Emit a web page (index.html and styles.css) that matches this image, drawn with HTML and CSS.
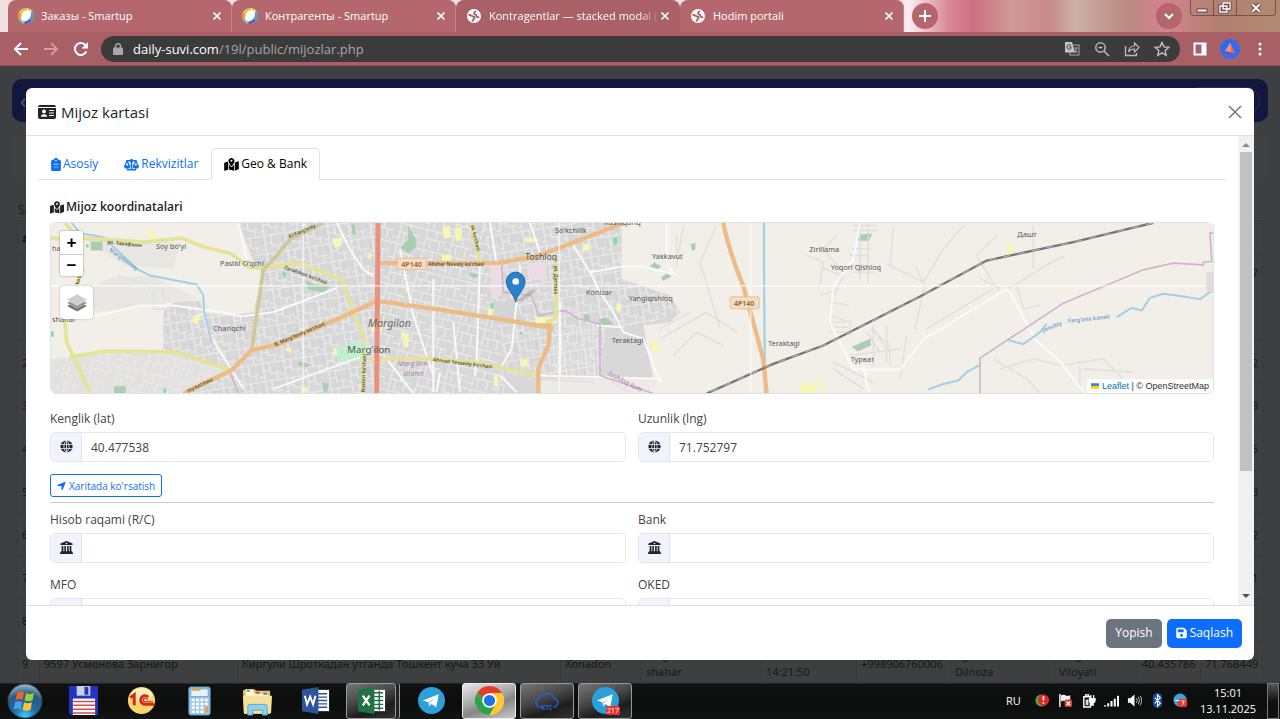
FILE: index.html
```html
<!DOCTYPE html>
<html lang="uz">
<head>
<meta charset="utf-8">
<title>Mijozlar</title>
<link rel="stylesheet" href="styles.css">
</head>
<body>
<svg class="defs" width="0" height="0" aria-hidden="true">
  <defs>
    <symbol id="i-smartup" viewBox="0 0 16 16">
      <circle cx="8" cy="8" r="8" fill="#ecc24a"/>
      <path d="M9 0a8 8 0 0 1 5.500 3.500L8 8z" fill="#e8d27a"/>
      <path d="M14.500 3.500A8 8 0 0 1 14 13L8 8z" fill="#4a9fd8"/>
      <path d="M14 13A8 8 0 0 1 6 15.800L8 8z" fill="#5a62c0"/>
      <path d="M6 15.800A8 8 0 0 1 .8 11.500L8 8z" fill="#8fb4e2"/>
      <path d="M.8 11.500A8 8 0 0 1 .8 4.500L8 8z" fill="#e59a3c"/>
      <ellipse cx="7.800" cy="7.800" rx="4.500" ry="6" transform="rotate(35 8 8)" fill="#fff"/>
    </symbol>
    <symbol id="i-world" viewBox="0 0 16 16">
      <circle cx="8" cy="8" r="7" fill="#fff"/>
      <path d="M2.500 7c2.500-.5 3 1.300 4.500 1.500s2 .8 1.200 2S7 12.500 6 13.200M13.200 9c-1.500.8-3-.2-2.700-1.500S8 6.500 8 5.300 9 3.500 10 3" fill="none" stroke="#a96067" stroke-width="1.900"/>
    </symbol>
    <symbol id="i-x" viewBox="0 0 10 10"><path d="M1.500 1.500l7 7M8.500 1.500l-7 7" stroke="currentColor" stroke-width="1.700"/></symbol>
    <symbol id="i-map" viewBox="0 0 576 512"><path fill="currentColor" d="M408 120c0 54.600-73.100 151.900-105.200 192c-7.700 9.600-22 9.600-29.600 0C241.100 271.900 168 174.600 168 120C168 53.700 221.700 0 288 0s120 53.700 120 120zm8 80.400c3.500-6.900 6.700-13.800 9.600-20.600c.5-1.200 1-2.500 1.500-3.700l116-46.400C558.900 123.400 576 135 576 152V422.800c0 9.800-6 18.600-15.100 22.300L416 503V200.400zM137.600 138.300c2.400 14.100 7.200 28.300 12.800 41.500c2.900 6.800 6.100 13.700 9.600 20.600V451.800L32.900 502.700C17.100 509 0 497.400 0 480.400V209.600c0-9.800 6-18.600 15.100-22.300l122.600-49zM327.800 332c13.900-17.400 35.700-45.700 56.200-77V504.300L192 449.400V255c20.500 31.300 42.300 59.600 56.200 77c20.500 25.600 59.100 25.600 79.600 0zM288 152a40 40 0 1 0 0-80 40 40 0 1 0 0 80z"/></symbol>
    <symbol id="i-globe" viewBox="0 0 16 16"><circle cx="8" cy="8" r="7.500" fill="currentColor"/><path d="M.5 5.500h15M.5 10.500h15M8 0v16M8 .5C3.700 4 3.700 12 8 15.500M8 .5c4.300 3.500 4.300 11.500 0 15" fill="none" stroke="#eef3ff" stroke-width="1"/></symbol>
    <symbol id="i-bank" viewBox="0 0 16 16"><path fill="currentColor" d="M8 0l7.500 3.200V5H.5V3.200zM2 6h2.200v6.500H2zM5.300 6h2v6.500h-2zM8.700 6h2v6.500h-2zM11.800 6H14v6.500h-2.200zM1.200 12.500h13.600L16 15v1H0v-1z"/><circle cx="8" cy="3" r="1" fill="#eef3ff"/></symbol>
    <symbol id="i-telegram" viewBox="0 0 28 28"><circle cx="14" cy="14" r="14" fill="#2ca0da"/><path d="M5 14L21.500 7.500 19 21l-5-3.500-2.500 2.700-.7-4.500z" fill="#fff"/><path d="M10.800 15.700L19 9.800l-6 6.500-1.500 3.900z" fill="#b7d9ec"/></symbol>
  </defs>
</svg>

<header class="tabstrip">
  <div class="tab">
    <svg class="fav"><use href="#i-smartup"/></svg><span class="tab-title">Заказы - Smartup</span>
    <button class="tab-x" aria-label="Yopish"><svg><use href="#i-x"/></svg></button>
  </div>
  <div class="tab">
    <svg class="fav"><use href="#i-smartup"/></svg><span class="tab-title">Контрагенты - Smartup</span>
    <button class="tab-x" aria-label="Yopish"><svg><use href="#i-x"/></svg></button>
  </div>
  <div class="tab tab-active">
    <svg class="fav"><use href="#i-world"/></svg><span class="tab-title">Kontragentlar — stacked modal (</span>
    <button class="tab-x" aria-label="Yopish"><svg><use href="#i-x"/></svg></button>
  </div>
  <div class="tab">
    <svg class="fav"><use href="#i-world"/></svg><span class="tab-title">Hodim portali</span>
    <button class="tab-x" aria-label="Yopish"><svg><use href="#i-x"/></svg></button>
  </div>
  <button class="round new-tab" aria-label="Yangi"><svg viewBox="0 0 12 12"><path d="M6 0v12M0 6h12" stroke="#fff" stroke-width="2"/></svg></button>
  <button class="round search-tab" aria-label="Qidirish"><svg viewBox="0 0 12 12"><path d="M2 4l4 4 4-4" fill="none" stroke="#fff" stroke-width="2"/></svg></button>
  <div class="win-btns">
    <button aria-label="Min"><svg viewBox="0 0 14 12"><rect x="2" y="7" width="10" height="3" fill="#fff" stroke="#5e4444"/></svg></button>
    <button aria-label="Max"><svg viewBox="0 0 14 12"><path d="M5 1h7v6H5zM2 4h7v6H2z" fill="#9b7466" stroke="#5e4444" stroke-width="3"/><path d="M5 1h7v6H5zM2 4h7v6H2z" fill="none" stroke="#fff" stroke-width="1.300"/></svg></button>
    <button class="win-x" aria-label="Close"><svg viewBox="0 0 14 12"><path d="M3.500 2.500l7 7M10.500 2.500l-7 7" stroke="#5e4444" stroke-width="4"/><path d="M3.500 2.500l7 7M10.500 2.500l-7 7" stroke="#fff" stroke-width="2"/></svg></button>
  </div>
</header>

<nav class="toolbar">
  <button aria-label="Orqaga"><svg viewBox="0 0 16 16"><path d="M15 8H2M8 2L2 8l6 6" fill="none" stroke="#fff" stroke-width="2"/></svg></button>
  <button aria-label="Oldinga"><svg viewBox="0 0 16 16"><path d="M1 8h13M8 2l6 6-6 6" fill="none" stroke="#d39da1" stroke-width="1.800"/></svg></button>
  <button aria-label="Yangilash"><svg viewBox="0 0 16 16"><path d="M13.300 10.500A6 6 0 1 1 12.800 4.500" fill="none" stroke="#fff" stroke-width="2"/><path d="M15 1v6.500H8.500z" fill="#fff"/></svg></button>
  <div class="omnibox">
    <svg class="lock" viewBox="0 0 10 12"><rect y="4.500" width="10" height="7.500" rx="1" fill="#a8a8a8"/><path d="M2.500 5V3.200a2.500 2.500 0 0 1 5 0V5" fill="none" stroke="#a8a8a8" stroke-width="1.400"/></svg>
    <span class="url"><b>daily-suvi.com</b>/19l/public/mijozlar.php</span>
    <button aria-label="Tarjima"><svg viewBox="0 0 16 16"><rect x="6" y="4" width="9" height="10" fill="none" stroke="#aaa"/><path d="M1 1h7l3 10.500H1z" fill="#c2c2c2"/><path d="M7 4.500A2.300 2.300 0 1 0 7 7.500V6H5" fill="none" stroke="#444" stroke-width="1"/><path d="M10 7h4M12.500 7q0 3-2 5M11 9l2.500 3" fill="none" stroke="#aaa" stroke-width="1"/></svg></button>
    <button aria-label="Masshtab"><svg viewBox="0 0 16 16"><circle cx="6.500" cy="6.500" r="4.700" fill="none" stroke="#b9b9b9" stroke-width="1.500"/><path d="M10 10l5 5M4.500 6.500h4" stroke="#b9b9b9" stroke-width="1.600"/></svg></button>
    <button aria-label="Ulashish"><svg viewBox="0 0 16 16"><path d="M1.500 5v9.500h11V12" fill="none" stroke="#b9b9b9" stroke-width="1.300"/><path d="M4.500 11q.5-6 6-6V2l4.500 4.500-4.500 4.500V8Q6.500 8 4.500 11z" fill="none" stroke="#b9b9b9" stroke-width="1.200"/></svg></button>
    <button aria-label="Xatcho'p"><svg viewBox="0 0 16 16"><path d="M8 1.500l2 4.400 4.800.5-3.600 3.200 1 4.700L8 11.900l-4.200 2.400 1-4.700L1.200 6.400 6 5.900z" fill="none" stroke="#c4c4c4" stroke-width="1.400"/></svg></button>
  </div>
  <button aria-label="Panel"><svg viewBox="0 0 16 16"><path fill="#fff" fill-rule="evenodd" d="M1.500 1.500h13v13h-13zM3.500 3.500v9h6v-9z"/></svg></button>
  <button aria-label="Profil" class="avatar"><svg viewBox="0 0 20 20"><circle cx="10" cy="10" r="10" fill="#2d6cf0"/><path d="M10.500 3.500l4.500 11-3.500-1z" fill="#f0604c"/><path d="M10.500 3.500L11.500 13.500 5 12z" fill="#ff8e6e"/><path d="M5 12l6.500 1.500-2 2z" fill="#c23a48"/></svg></button>
  <button aria-label="Menyu"><svg viewBox="0 0 16 16"><g fill="#fff"><circle cx="8" cy="3" r="1.500"/><circle cx="8" cy="8" r="1.500"/><circle cx="8" cy="13" r="1.500"/></g></svg></button>
</nav>

<main class="viewport">
  <div class="page" aria-hidden="true">
    <div class="topbar"><span>‹</span><span class="topbar-pill"></span></div>
    <div class="filters"></div>
    <div class="caption">Sahifa</div>
    <table class="grid">
      <colgroup><col class="c1"><col class="c2"><col class="c3"><col class="c4"><col class="c5"><col class="c6"><col class="c7"><col class="c8"><col class="c9"><col class="c10"><col class="c11"></colgroup>
      <tr class="head"><th>#</th><th></th><th></th><th></th><th></th><th></th><th></th><th></th><th></th><th></th><th></th></tr>
      <tr class="tall"><td></td><td></td><td></td><td></td><td></td><td></td><td></td><td></td><td></td><td></td><td>71.752797</td></tr>
      <tr><td>2</td><td></td><td></td><td></td><td></td><td></td><td></td><td></td><td></td><td></td><td>71.768442</td></tr>
      <tr><td>3</td><td></td><td></td><td></td><td></td><td></td><td></td><td></td><td></td><td></td><td>71.768443</td></tr>
      <tr><td>4</td><td></td><td></td><td></td><td></td><td></td><td></td><td></td><td></td><td></td><td>71.768445</td></tr>
      <tr><td>5</td><td></td><td></td><td></td><td></td><td></td><td></td><td></td><td></td><td></td><td>71.768443</td></tr>
      <tr><td>6</td><td></td><td></td><td></td><td></td><td></td><td></td><td></td><td></td><td></td><td>71.768442</td></tr>
      <tr><td>7</td><td></td><td></td><td></td><td></td><td></td><td></td><td></td><td></td><td></td><td>71.768441</td></tr>
      <tr><td>8</td><td></td><td></td><td></td><td></td><td></td><td></td><td></td><td></td><td></td><td></td></tr>
      <tr><td>9</td><td>9597 Усмонова Зарнигор</td><td>Киргули Шроткадан утганда Тошкент куча 33 Уй</td><td>Xonadon</td><td>Farg'ona<br>shahar</td><td>13.11.2025<br>14:21:50</td><td>+998906760006</td><td>Agent<br>Dilnoza</td><td>Farg'ona<br>Viloyati</td><td>40.435786</td><td>71.768449</td></tr>
    </table>
  </div>

  <section class="modal" role="dialog" aria-labelledby="ttl">
    <header class="modal-head">
      <svg class="i-card" viewBox="0 0 18 14"><path fill="currentColor" fill-rule="evenodd" d="M2 0h14a2 2 0 0 1 2 2H0a2 2 0 0 1 2-2zM0 3h18v9a2 2 0 0 1-2 2H2a2 2 0 0 1-2-2zM6 4.500a1.900 1.900 0 1 0 0 3.800 1.900 1.900 0 0 0 0-3.800zM2.800 11.800h6.400Q9 9.200 6.800 9.200H5.200Q3 9.200 2.800 11.800zM11 5v1h5V5zM11 7.500v1h5v-1zM11 10v1h5v-1z"/></svg>
      <h1 id="ttl">Mijoz kartasi</h1>
      <button class="close" aria-label="Yopish"><svg viewBox="0 0 14 14"><path d="M1 1l12 12M13 1L1 13" stroke="#7a7a7a" stroke-width="1.600"/></svg></button>
    </header>
    <div class="modal-mid">
      <div class="modal-body">
        <div class="nav-tabs" role="tablist">
          <button role="tab"><svg class="i-clip" viewBox="0 0 384 512"><path fill="currentColor" fill-rule="evenodd" d="M192 0c-41.800 0-77.400 26.700-90.500 64H64C28.700 64 0 92.700 0 128V448c0 35.300 28.700 64 64 64H320c35.300 0 64-28.700 64-64V128c0-35.300-28.700-64-64-64H282.500C269.400 26.700 233.800 0 192 0zm0 64a32 32 0 1 1 0 64 32 32 0 1 1 0-64zM96 230H290V256H96zM96 340H290V366H96z"/></svg>Asosiy</button>
          <button role="tab"><svg class="i-wide" viewBox="0 0 20 16"><path d="M10 1v14M4 15h12M3 3h14" stroke="currentColor" stroke-width="2"/><circle cx="10" cy="3" r="2.300" fill="currentColor"/><path d="M4.200 3.500L1 10h6.400zM15.800 3.500L12.600 10H19z" fill="none" stroke="currentColor" stroke-width="1.600"/><path fill="currentColor" d="M0 9.500h8.400a4.200 4 0 0 1-8.400 0zM11.600 9.500H20a4.200 4 0 0 1-8.400 0z"/></svg>Rekvizitlar</button>
          <button role="tab" class="active" aria-selected="true"><svg class="i-wide"><use href="#i-map"/></svg>Geo &amp; Bank</button>
        </div>
        <div class="pane">
          <h2><svg class="i-wide"><use href="#i-map"/></svg>Mijoz koordinatalari</h2>
          <div class="map">
            <svg class="tiles" viewBox="33 21 3486 513" preserveAspectRatio="xMidYMid slice">
              <defs>
                <pattern id="p1" width="64" height="54" patternUnits="userSpaceOnUse" patternTransform="rotate(-9)"><path d="M0 4h64M14 4v50M34 4v32M34 36h30M52 36v18M14 26h20M0 44h14" fill="none" stroke="#f0f0f0" stroke-width="3"/><path d="M24 4v20M44 6v28M4 8v34" stroke="#c6c6c6" stroke-width="1"/></pattern>
                <pattern id="p2" width="80" height="62" patternUnits="userSpaceOnUse" patternTransform="rotate(14)"><path d="M0 8h80M20 8v54M20 34h60M50 8v26M64 34v28M0 52h20M35 34v28" fill="none" stroke="#f0f0f0" stroke-width="3"/><path d="M8 10v40M58 10v22M28 36v24" stroke="#c8c8c8" stroke-width="1"/></pattern>
                <pattern id="p3" width="24" height="90" patternUnits="userSpaceOnUse" patternTransform="rotate(-3)"><path d="M6 0v90M0 80h24M17 0v80" fill="none" stroke="#eee" stroke-width="2"/></pattern>
              </defs>
              <rect x="0" y="0" width="3600" height="600" fill="#f2efe9"/>
              <g class="urban">
                <path d="M595 20L645 150 668 170 640 290 560 300 490 290 480 255 400 260 370 290V400L570 460 430 533H1800L1840 490 1810 330 1890 320 1920 290 1890 240 1745 190V22z" fill="#d9d8d8"/>
                <path d="M33 430L200 415 400 410 570 465 430 533H33z" fill="#e4e2e0"/>
                <path d="M130 70L420 80 400 160 250 150zM200 190L330 180 480 250 330 270 170 290 130 240z" fill="#e9e7e3"/>
                <path d="M595 20L668 170 640 290 560 300 480 255 370 290V400L570 460 430 533H1010V20z" fill="url(#p1)"/>
                <path d="M1010 20H1330L1400 533H1010z" fill="url(#p2)"/>
                <path d="M1330 20H1745V190L1890 240 1920 290 1810 330 1700 330 1680 480H1400z" fill="url(#p1)"/>
                <path d="M1535 330H1680V490H1535z" fill="url(#p3)"/>
                <path d="M33 430L200 415 400 410 570 465 430 533H33z" fill="url(#p2)" opacity=".6"/>
                <path d="M1500 490H1860L1820 534H1500z" fill="#eeebe6"/>
                <path d="M1360 260L1420 250 1460 330 1370 325z" fill="#d4d4d4"/>
              </g>
              <g fill="#eddbe5"><path d="M1352 150h32l10 70-20 30-20-5zM1460 145l60-8v55l-50 3z"/></g>
              <g fill="#f6f6b8"><path d="M315 42l25 3 15 30-25-5zM875 70l32-3-3 25-20 3zM460 300l28-8-18 35-14-8zM880 398h24v22h-24zM1085 350l22 5-2 40-15-3zM985 112h8v18h-8zM1098 212h10v18h-10zM785 515h18v16h-18zM740 395l16 4-3 10-14-2zM996 323h30v26h-30zM1208 35l22-4 4 34-22 3zM1246 36h20v40h-20zM1205 120l28-4v22l-26 4zM1345 275l14 3-3 24-12-4zM1362 478h12v36h-12zM1440 432h24v20h-24zM1455 68l34-2v12l-34 4zM1628 85h20v20h-20zM1730 265l16 5-8 24-10-10zM1834 380h22v30h-22zM1486 305h65v18h-65zM2280 505l50-4v30h-50zM2898 90l20-4 4 28-20 2zM2340 490h12v40h-12z"/></g>
              <g fill="#a9cfb0"><path d="M152 78h36v27h-36zM1105 30l22 40 2 25-25 18-22-15 22-25zM935 25l12 4v28h-10zM795 195l30 12 50 4-25 20-45-8zM775 436l40 12-20 8-20-6zM845 500l22 4-6 28-10-4zM222 512h35v22h-35zM1290 170l28 8-10 10-20-6zM1635 295l15 8-5 14-15-4zM1675 312l25-7 22 22-35 2zM1830 152l12-12 22 12-14 12zM1862 186l18-12 15 8-25 14zM1952 86l14-4v20l-10 4zM2460 57l36-3-8 22h-35zM2435 394l56-24 2 20-40 18z"/></g>
              <path d="M890 400l60-22 30 10v42l-85 10z" fill="#bdf0cc"/>
              <g fill="#74e0b4"><path d="M730 168l8 6-2 12-8-6zM138 86h8v10h-8zM33 348h8v16h-8zM1352 262h8v18h-8zM1720 68l12-4v22l-12 2zM370 520h8v12h-8zM1440 350h6v6h-6z"/></g>

              <g class="lane-soft">
                <path d="M230 180l80 20 40 50M90 250l90 20M370 220v50M340 220v60h50M60 440v80M100 470l120 20M120 430v100M340 430l-20 100"/>
                <path d="M1910 60v90M1930 30l-20 120M2030 30l-50 110 60 200M1950 290l-90 50M1860 370l140-80 90 60M1900 420l70-70 80 40M1700 490l150 90M2390 60l-40 40 50 60M2300 120l50 20-10 70M2350 160l60 20-40 80 60 10"/>
                <path d="M2560 30l-10 120 100 50 60-100 60-70M2625 150l30 60-30 130M2600 360l-20 130M2870 60l-60 60 60 100M2930 210l20 70 50-10M2980 30v130M2660 340l100-60 100-60M2820 190l60 30M2880 460l100-30 80 20 130-20 60 60M3120 450v84M3130 460l150 10M2860 430l100 60 40 44"/>
                <path d="M2490 340l60 50v60M2430 420l150-20M2500 330v120M2540 330v110M2370 300l60 20v40M2340 240l60-20"/>
              </g>
              <g class="hatch"><path d="M2440 30h70M2438 45h75M2435 100h60M2430 120h55M2430 150h50M2440 170h60M2460 20v170M2485 20v180M2370 320h50M2368 335h56M2366 350h50M2480 350l40 60M2500 340l40 60M2380 440l120 60M2380 460l90 60M1460 490l200 10"/></g>

              <g class="lane">
                <path d="M130 310L300 270 400 270 550 290 600 303 700 290 890 218"/>
                <path d="M490 290L505 350 560 440 610 520M700 520L960 425M890 22l40 80 40 60 30 20M595 22L620 130M1040 430l80 104"/>
                <path d="M1320 140L1310 430 1305 480M1430 260l-15 140-35 60M1380 480l50 50M1470 22l30 90M1440 150v70M1600 90l50 80 30 60 40 60 30 60 60 20 50 130M1650 170l100-17h60l100 25M1880 25v120l20 30M1480 480L1865 490M1670 330l80 5M1200 470l-10 60M1080 100l40 200 60 180M1180 190v340M1350 20l20 130M1560 260v220M1240 320l20 210"/>
                <path d="M2460 22l-20 110-60 80-10 110 70 140 140 0 70-90 100-60 130-80 25-10 80 150 70 60 100 130M2470 450l15 80"/>
              </g>
              <path d="M2905 220l130-80 40-18" class="lane-soft"/>
              <g class="river">
                <path d="M95 22L130 65M130 55L190 65 290 160 330 180 470 207 490 240 492 290 515 380"/>
                <path d="M2172 22V150L2175 534" stroke-width="7"/>
                <path d="M2665 522l40-15 50-12 25-25 40-22M2900 372l50 14 50-36 20-25M3230 305l45-28 30 8 25-38 40-12 60 8 50 8 50-35"/>
              </g>
              <g class="border"><path d="M570 470l25 62M1385 150l5 80 85 10 20 60 80-15 40 25 65 15V480l160 54M2820 534V428l250-165 240-100 90-20 90 5v-8l25-2-5-85h25"/></g>
              <g class="road-y">
                <path d="M75 22l40 45 80 5 120 8 110-12 70 27 80 20 50 40 40 3 110-16 100 40 30 10 70 190M33 68l60 5M130 160q-30 60-55 160l5 60 70 150M90 425l110-18 200 2 175 55M985 430H1180M970 400v134M1170 430l130 10 190 38M1295 22l28 130M1548 140v170l-30 10"/>
                <path d="M850 22l-100 50-50 60-30 30-35 240" stroke="#cfc99a"/>
              </g>
              <g class="road-o">
                <path d="M430 534l145-70 60-60 80-18 210-90 85-40 200 28 220 35 110 20M1020 143H1370l120-20 260-100M1500 330h30l-5 60-30 70v74M2050 22q15 80 60 190l60 220 10 102"/>
              </g>
              <path d="M1014 22L1010 534" stroke="#e8917c" stroke-width="15"/>
              <path d="M3340 22L3100 80 2840 135 2640 243 2350 390 2200 445 2000 534" fill="none" stroke="#747474" stroke-width="7"/>
              <path d="M3340 22L3100 80 2840 135 2640 243 2350 390 2200 445 2000 534" fill="none" stroke="#b9b9b9" stroke-width="3" stroke-dasharray="22 22"/>
              <path d="M33 211H3520M790 22v512M1558 22v512M2132 22v512" stroke="#fff" stroke-width="5" opacity=".6"/>
              <path d="M3500 170h20v60h-20z" fill="#dcdcdc"/>

              <g class="place">
                <text x="348" y="101">Soy bo'yi</text><text x="540" y="151">Pastki O'qchi</text><text x="519" y="345">Chariqchi</text>
                <text x="36" y="107">ha</text><text x="36" y="319">shahar</text>
                <text x="1545" y="53">So'kchilik</text><text x="1836" y="131">Yakkavut</text><text x="1638" y="238">Konizar</text><text x="1766" y="257">Yangiqishloq</text><text x="1715" y="381">Teraktagi</text><text x="2184" y="390">Teraktagi</text><text x="2308" y="110">Zirillama</text><text x="2372" y="164">Yoqori Qishloq</text><text x="2932" y="63">Дашт</text><text x="2432" y="438">Турват</text>
                <text x="1692" y="28">Rashiqariq</text>
              </g>
              <text class="town" x="1456" y="132">Toshloq</text>
              <text class="town big" x="922" y="411">Marg'ilon</text>
              <text class="ital" x="984" y="335">Margilon</text>
              <text class="lilac" x="1074" y="451">Marg'ilon</text><text class="lilac" x="1090" y="480">shahri</text>
              <text class="lilac" transform="translate(1700 478) rotate(27)">Toshloq tum</text>
              <g class="street">
                <text transform="translate(202 84) rotate(6)">ул. Зарафшон</text>
                <text transform="translate(732 160) rotate(20)">Zarafshon ko'chasi</text>
                <text transform="translate(748 68) rotate(-23)">Al-Farg'oniy</text>
                <text transform="translate(706 392) rotate(-23)">B. Marg'iloniy ko'chasi</text>
                <text transform="translate(444 532) rotate(-26)">niy ko'chasi</text>
                <text x="1165" y="152">Alisher Navoiy ko'chasi</text>
                <text transform="translate(1178 437) rotate(7)">Ahmad Yassaviy ko'chasi</text>
                <text transform="translate(974 530) rotate(-88)">Buston ko'chasi</text>
                <text transform="translate(1292 30) rotate(76)">ek ko'chasi</text>
                <text transform="translate(1542 150) rotate(90)">ул. Дустлик</text>
                <text transform="translate(116 208) rotate(-75)">ko'cha</text>
              </g>
              <g class="water">
                <text transform="translate(206 106) rotate(36)">Margilonsoy</text>
                <text transform="translate(3010 350) rotate(-22)">Janubiy</text><text transform="translate(3084 322) rotate(-6)">Farg'ona kanali</text>
              </g>
              <g class="shield"><rect x="1072" y="128" width="88" height="34" rx="4"/><text x="1084" y="153">4P140</text><rect x="2070" y="244" width="88" height="36" rx="4"/><text x="2082" y="270">4P140</text></g>
              <path d="M1427 258l52-38 8 8-38 28z" fill="#777" opacity=".35"/>
              <path d="M1427 260c-5-25-28-38-28-62a28 28 0 0 1 56 0c0 24-23 37-28 62z" fill="#2a81cb" stroke="#2168a5" stroke-width="3"/><circle cx="1427" cy="198" r="10" fill="#fff"/>
            </svg>
            <div class="zoomer"><button aria-label="Zoom in">+</button><button aria-label="Zoom out">−</button></div>
            <button class="layers" aria-label="Layers"><svg viewBox="0 0 20 18"><path d="M0 12l10 5.500L20 12l-3-1.500-7 4-7-4z" fill="#777"/><path d="M0 9l10 5.500L20 9l-3-1.500-7 4-7-4z" fill="#9a9a9a"/><path d="M0 5.700L10 .3l10 5.400-10 5.500z" fill="#cfcfcf"/></svg></button>
            <div class="credit"><svg viewBox="0 0 12 8"><path fill="#4c7be1" d="M0 0h12v4H0z"/><path fill="#ffd500" d="M0 4h12v4H0z"/></svg><span><a href="#">Leaflet</a> | © OpenStreetMap</span></div>
          </div>
          <div class="row">
            <div class="field"><label for="lat">Kenglik (lat)</label><div class="group"><span class="addon"><svg><use href="#i-globe"/></svg></span><input id="lat" value="40.477538"></div></div>
            <div class="field"><label for="lng">Uzunlik (lng)</label><div class="group"><span class="addon"><svg><use href="#i-globe"/></svg></span><input id="lng" value="71.752797"></div></div>
          </div>
          <button class="show"><svg viewBox="0 0 448 512"><path fill="currentColor" d="M429.600 92.100c4.900-11.900 2.100-25.600-7-34.700s-22.800-11.900-34.700-7l-352 144c-14.200 5.800-22.200 20.800-19.300 35.800s16.100 25.800 31.400 25.800H224V432c0 15.300 10.800 28.400 25.800 31.400s30-5.100 35.800-19.300l144-352z"/></svg>Xaritada ko'rsatish</button>
          <hr>
          <div class="row">
            <div class="field"><label for="rc">Hisob raqami (R/C)</label><div class="group"><span class="addon"><svg><use href="#i-bank"/></svg></span><input id="rc"></div></div>
            <div class="field"><label for="bank">Bank</label><div class="group"><span class="addon"><svg><use href="#i-bank"/></svg></span><input id="bank"></div></div>
          </div>
          <div class="row">
            <div class="field"><label for="mfo">MFO</label><div class="group"><span class="addon"></span><input id="mfo"></div></div>
            <div class="field"><label for="oked">OKED</label><div class="group"><span class="addon"></span><input id="oked"></div></div>
          </div>
        </div>
      </div>
      <div class="scroll" aria-hidden="true">
        <svg viewBox="0 0 8 4"><path d="M0 4l4-4 4 4z" fill="#8a8a8a"/></svg>
        <div class="track"><div class="thumb"></div></div>
        <svg viewBox="0 0 8 4"><path d="M0 0l4 4 4-4z" fill="#505050"/></svg>
      </div>
    </div>
    <footer class="modal-foot">
      <button class="btn grey">Yopish</button>
      <button class="btn blue"><svg viewBox="0 0 448 512"><path fill="#fff" fill-rule="evenodd" d="M64 32C28.700 32 0 60.700 0 96V416c0 35.300 28.700 64 64 64H384c35.300 0 64-28.700 64-64V173.300c0-17-6.700-33.300-18.700-45.300L352 50.700C340 38.700 323.700 32 306.700 32H64zm0 96c0-17.700 14.300-32 32-32H288c17.700 0 32 14.300 32 32v64c0 17.700-14.300 32-32 32H96c-17.700 0-32-14.300-32-32V128zM224 288a64 64 0 1 1 0 128 64 64 0 1 1 0-128z"/></svg>Saqlash</button>
    </footer>
  </section>
</main>

<footer class="taskbar">
  <button class="task start" aria-label="Start"><svg viewBox="0 0 36 36"><defs><radialGradient id="orb" cx=".5" cy=".95" r=".95"><stop offset="0" stop-color="#3fd0f5"/><stop offset=".35" stop-color="#1d6ca6"/><stop offset=".7" stop-color="#2b5a80"/><stop offset="1" stop-color="#9fbccd"/></radialGradient></defs><circle cx="18" cy="18" r="17" fill="url(#orb)" stroke="#2a4a60"/><path d="M10 10q4-2.500 7-.8l-1.300 7.500q-3.500-1.500-7.200.8z" fill="#f0622d"/><path d="M19 10q4 2 8-.3l-1.500 7.500q-4 2-8 0z" fill="#9bcf3a"/><path d="M8 19.500q3.800-2.300 7.300-.7l-1.300 7.200q-3.500-1.500-7.300.6z" fill="#4aa4ec"/><path d="M17 19.300q4 2 8 0l-1.500 7.400q-4 2-7.800 0z" fill="#fcc53a"/></svg></button>
  <button class="task" aria-label="Total Commander"><svg viewBox="0 0 32 32"><path d="M1 1h30v30H3l-2-2z" fill="#2334c0"/><path d="M9 1h14v10H9z" fill="#c9d2e0"/><path d="M17 2h4v8h-4z" fill="#2334c0"/><path d="M5 14h23v17H5z" fill="#fff"/><path d="M5 17h23M5 21h23M5 25h23M5 29h23" stroke="#d8494b" stroke-width="1.500"/></svg></button>
  <button class="task" aria-label="1C"><svg viewBox="0 0 32 32"><circle cx="16" cy="16" r="14" fill="#f7d76a"/><ellipse cx="16" cy="10" rx="11" ry="7" fill="#fdf0b8"/><path d="M4.500 13l4-3v11M23 12.500a4.500 4.500 0 1 0-3 7.500h9" fill="none" stroke="#d9241b" stroke-width="3"/><path d="M22 15.500a2 2 0 1 0-2 2h8" fill="none" stroke="#d9241b" stroke-width="1.200"/></svg></button>
  <button class="task" aria-label="Calculator"><svg viewBox="0 0 32 32"><rect x="5" y="2" width="22" height="29" rx="2" fill="#9fcbea" stroke="#5b94bf"/><rect x="7" y="4" width="18" height="8" fill="#e6f3fb" stroke="#6aa2cc"/><path d="M8 5h9" stroke="#f2a23a" stroke-width="2"/><path d="M8 15.500h17M8 19.500h17M8 23.500h12M8 27.500h12" stroke="#fff" stroke-width="2.600" stroke-dasharray="3 1.500"/><path d="M22 22.500h3v6h-3z" fill="#f2983a"/></svg></button>
  <button class="task" aria-label="Explorer"><svg viewBox="0 0 32 32"><path d="M1 6l3-2h8l3 2h14v24H2z" fill="#e8c565"/><path d="M4 5h7l2 4h14v6H4z" fill="#fdf6dc"/><path d="M5 5h3v2H5z" fill="#4aa564"/><path d="M14 7h4v2h-4z" fill="#c84b4b"/><path d="M22 8h4v2h-4z" fill="#4b82c8"/><path d="M1 11h30l-1 18H2z" fill="#f6e09a"/><path d="M6 31V22q0-2 2-2h16q2 0 2 2v9h-5v-5H11v5z" fill="#8fd0ee" stroke="#5aa7d3"/></svg></button>
  <button class="task" aria-label="Word"><svg viewBox="0 0 32 32"><path d="M15 5h15v22H15z" fill="#fff"/><path d="M18 9h10M18 12.500h10M18 16h10M18 19.500h10M18 23h10" stroke="#2b579a" stroke-width="1.500"/><path d="M2 5l17-3v28L2 27z" fill="#2b579a"/><path d="M5 11l2.300 9L10.500 12l3 8L16 11" fill="none" stroke="#fff" stroke-width="2"/></svg></button>
  <button class="task open stacked" aria-label="Excel"><svg viewBox="0 0 32 32"><path d="M15 5h15v22H15z" fill="#fff"/><path d="M18 8h10M18 12h10M18 16h10M18 20h10M18 24h10M24 6v20" stroke="#217346" stroke-width="1.500"/><path d="M2 5l17-3v28L2 27z" fill="#217346"/><path d="M7 11l7 10M14 11L7 21" fill="none" stroke="#fff" stroke-width="2.400"/></svg></button>
  <button class="task" aria-label="Telegram"><svg class="tg"><use href="#i-telegram"/></svg></button>
  <button class="task open lit" aria-label="Chrome"><svg viewBox="0 0 32 32"><circle cx="16" cy="16" r="15" fill="#fcc934"/><path d="M16 16L3 8.500A15 15 0 0 1 29 8.500H16z" fill="#e33b2e"/><path d="M3 8.500A15 15 0 0 0 16 31l6.500-11.200L16 16 9.500 19.700z" fill="#2ba24c"/><path d="M3 8.500L9.500 19.700 16 16z" fill="#2ba24c"/><path d="M29 8.500H16v4l6.500 7.300L16 31A15 15 0 0 0 29 8.500z" fill="#fcc934"/><circle cx="16" cy="16" r="7.500" fill="#fff"/><circle cx="16" cy="16" r="5.800" fill="#1a73e8"/></svg></button>
  <button class="task open" aria-label="KTC"><svg class="cloud" viewBox="0 0 32 32"><path d="M10 23H8a5 5 0 0 1-1-9.800A6.500 6.500 0 0 1 15 8a6.500 6.500 0 0 1 9 5 5.200 5.200 0 0 1 1 10h-2" fill="none" stroke="#1f63d8" stroke-width="1.600"/><text x="16" y="26" class="ktc">KTC</text></svg></button>
  <button class="task open" aria-label="Telegram"><svg class="tg"><use href="#i-telegram"/></svg><span class="count">217</span></button>
  <div class="tray">
    <span class="lang">RU</span>
    <svg viewBox="0 0 16 16"><circle cx="7" cy="8" r="6.500" fill="#3bb54a"/><circle cx="9" cy="7.500" r="6" fill="#e5252a"/><path d="M9 3.500V8M9 9.800v1.700" stroke="#fff" stroke-width="1.800"/></svg>
    <svg viewBox="0 0 16 16"><path d="M2 1v14" stroke="#fff" stroke-width="1.500"/><path d="M3 2.500q3-1.500 5 0t5 0V9q-3 1.500-5 0T3 9z" fill="#eee"/><rect x="7" y="7" width="8" height="8" rx="2" fill="#e0392b"/><path d="M9 9l4 4M13 9l-4 4" stroke="#fff" stroke-width="1.400"/></svg>
    <svg viewBox="0 0 16 16"><path d="M3 4h7v11H3zM5 2h3v2H5z" fill="none" stroke="#fff" stroke-width="1.500"/><path d="M5 7h3v6H5z" fill="#ddd"/><path d="M9 6h6v2q0 2-2 2.500V13h-2v-2.500Q9 10 9 8zM10.500 2v4M13.500 2v4" fill="#fff" stroke="#fff" stroke-width="1.300"/></svg>
    <svg viewBox="0 0 16 16"><path d="M1 13v1.500M4.500 11v3.500M8 8.500v6M11.500 6v8.500M15 3v11.500" stroke="#fff" stroke-width="2.200"/></svg>
    <svg viewBox="0 0 16 16"><path d="M1 5.500h2.500L8 1.500v13l-4.500-4H1z" fill="#fff"/><path d="M10 5.500q2 2.500 0 5M12 4q3 4 0 8M14 3q3.500 5 0 10" fill="none" stroke="#ccc"/></svg>
    <svg viewBox="0 0 16 16"><rect x="3" y="0" width="10" height="16" rx="5" fill="#174a9c"/><path d="M5 5l6 6-3 3V2l3 3-6 6" fill="none" stroke="#fff" stroke-width="1.200"/></svg>
    <svg viewBox="0 0 16 16"><circle cx="7.500" cy="7.500" r="7" fill="#37a7df"/><rect x="5" y="6" width="10" height="9" rx="3" fill="#e63a34"/><path d="M2 8h5M9 8.500h3l-2 4" fill="none" stroke="#fff"/></svg>
    <time class="clock">15:01<br>13.11.2025</time>
    <button class="peek" aria-label="Desktop"></button>
  </div>
</footer>
</body>
</html>
```
FILE: styles.css
```css
* { box-sizing: border-box; }
html, body { height: 100%; }
body { margin: 0; display: flex; flex-direction: column; overflow: hidden; font-family: "Open Sans", "Noto Sans", sans-serif; font-size: 12px; line-height: 18px; color: #212529; }
button { font: inherit; color: inherit; padding: 0; border: 0; background: none; }
svg { flex: none; display: block; }
.defs { position: absolute; }

.tabstrip { height: 32px; flex: none; display: flex; padding-left: 8px; color: #fff; background: linear-gradient(90deg, #f1dfe2 0 70%, #fbeef0 71%, #d98a98 74%, #cd6f83 76%, #cf9a98 79%, #c98a8a 82%, #cdb0a6 84%, #b98a83 88%, #d4838f 91%, #b3806f 95%, #b08a70); }
.tab { flex: 0 1 224px; min-width: 0; display: flex; align-items: center; padding: 0 10px; border-radius: 8px 8px 0 0; background: #b4676c; box-shadow: inset -1px 0 #c08086; }
.tab-active { background: #a96067; box-shadow: none; }
.fav { width: 16px; height: 16px; margin-right: 7px; }
.tab-title { flex: 1; font-size: 11px; white-space: nowrap; margin-right: 2px; }
.tab-active .tab-title { -webkit-mask-image: linear-gradient(90deg, #000 88%, transparent 102%); mask-image: linear-gradient(90deg, #000 88%, transparent 102%); }
.tab-x svg { width: 10px; height: 10px; }
.round { width: 26px; height: 26px; margin: 3px 0 0 8px; border-radius: 50%; background: #b5666c; display: grid; place-items: center; }
.round svg { width: 12px; height: 12px; }
.search-tab { margin-left: auto; }
.win-btns { display: flex; height: 16px; margin: 0 4px 0 8px; border: 1px solid #6e5550; border-top: 0; border-radius: 0 0 4px 4px; }
.win-btns button { width: 23px; display: grid; place-items: center; border-right: 1px solid #6e5550; }
.win-btns .win-x { width: 38px; border: 0; }
.win-btns svg { width: 14px; height: 12px; }

.toolbar { height: 34px; flex: none; display: flex; align-items: center; padding: 0 5px 0 6px; background: #a95f66; border-bottom: 1px solid #8d5358; }
.toolbar button { width: 30px; display: grid; place-items: center; }
.toolbar svg { width: 16px; height: 16px; }
.toolbar .avatar svg { width: 20px; height: 20px; }
.omnibox { flex: 1; height: 26px; margin: 0 5px; padding: 0 3px 0 12px; display: flex; align-items: center; border-radius: 13px; background: #3b3b3b; color: #a5a5a5; }
.omnibox .lock { width: 10px; height: 12px; margin-right: 10px; }
.url { flex: 1; font-size: 13px; }
.url b { font-weight: 400; color: #fff; }

.viewport { flex: 1; min-height: 0; position: relative; overflow: hidden; background: #3e3f41; }
.page { padding: 13px 12px 0; color: #17181a; }
.topbar { height: 43px; display: flex; justify-content: space-between; align-items: center; padding: 0 8px; border-radius: 10px; background: #11173d; color: #5a5d78; font-size: 20px; }
.topbar-pill { width: 76px; height: 28px; border: 1px solid #2b3055; border-radius: 14px; }
.filters { height: 44px; margin-top: 13px; border-radius: 5px; background: #404143; }
.caption { margin: 22px 0 0 6px; height: 19px; }
.grid { width: calc(100% - 11px); margin-left: 5px; border-collapse: collapse; table-layout: fixed; font-family: "Noto Sans", sans-serif; line-height: 17px; }
.grid td, .grid th { height: 43px; padding: 0 4px; border: 1px solid #38383f; text-align: left; white-space: nowrap; font-size: 11px; }
.grid .head th { height: 35px; }
.grid .tall td { height: 85px; vertical-align: top; padding-top: 8px; }
.c1 { width: 22px; } .c2 { width: 198px; } .c3 { width: 323px; } .c4 { width: 81px; } .c5 { width: 120px; } .c6 { width: 95px; } .c7 { width: 94px; } .c8 { width: 104px; } .c9 { width: 83px; } .c10 { width: 63px; } .c11 { width: 62px; }

.modal { position: absolute; inset: 22px 26px 22px; display: flex; flex-direction: column; background: #fff; border-radius: 6px; }
.modal-head { height: 48px; flex: none; display: flex; align-items: center; gap: 5px; padding: 0 12px; border-bottom: 1px solid #dee2e6; }
.modal-head h1 { flex: 1; margin: 0; font-size: 15px; font-weight: 400; }
.i-card { width: 18px; height: 14px; }
.close svg { width: 14px; height: 14px; }
.modal-mid { flex: 1; min-height: 0; display: flex; }
.modal-body { flex: 1; min-width: 0; overflow: auto; scrollbar-width: none; padding: 12px; }
.nav-tabs { display: flex; border-bottom: 1px solid #dee2e6; }
.nav-tabs button { height: 32px; margin-bottom: -1px; padding: 0 12px; display: flex; align-items: center; gap: 2px; color: #0d6efd; border: 1px solid transparent; border-radius: 5px 5px 0 0; }
.nav-tabs .active { color: #000; background: #fff; border-color: #dee2e6; border-bottom-color: #fff; }
.i-clip { width: 10px; height: 13px; }
.i-wide { width: 15px; height: 13px; }
.pane { padding: 18px 12px 12px; }
.pane h2 { display: flex; align-items: center; gap: 2px; margin: 0 0 6px; font-size: 12px; font-weight: 600; }
.pane h2 svg { width: 14px; }
.map { position: relative; height: 172px; border: 1px solid #dee2e6; border-radius: 6px; overflow: hidden; font-family: "Noto Sans", sans-serif; }
.tiles { width: 100%; height: 100%; }
.lane { fill: none; stroke: #fafafa; stroke-width: 6; }
.lane-soft { fill: none; stroke: #e4e0de; stroke-width: 5; }
.hatch { fill: none; stroke: #dfdcda; stroke-width: 4; }
.river { fill: none; stroke: #a3d0e2; stroke-width: 6; }
.border { fill: none; stroke: #cdb6cd; stroke-width: 5; }
.road-y { fill: none; stroke: #e3e498; stroke-width: 11; stroke-linejoin: round; }
.road-o { fill: none; stroke: #ecbb86; stroke-width: 13; stroke-linejoin: round; }
.place { font-size: 22px; fill: #555; }
.town { font-size: 26px; fill: #555; }
.town.big { font-size: 29px; }
.ital { font-size: 32px; font-style: italic; fill: #6a6a6a; }
.lilac { font-size: 21px; font-style: italic; fill: #a77fb0; }
.street { font-size: 15px; font-weight: 600; fill: #54511f; }
.water { font-size: 17px; font-weight: 600; fill: #6f9fcb; }
.shield rect { fill: #f8dcbd; stroke: #d9b48c; stroke-width: 2; }
.shield text { font-size: 21px; font-weight: 600; fill: #84643f; }
.zoomer { position: absolute; top: 8px; left: 9px; display: flex; flex-direction: column; border-radius: 2px; background: #fff; box-shadow: 0 0 2px #777; }
.zoomer button { width: 23px; height: 23px; font-family: "Liberation Sans", sans-serif; font-size: 17px; font-weight: 700; color: #000; }
.zoomer button + button { height: 22px; border-top: 1px solid #ccc; }
.layers { position: absolute; top: 63px; left: 9px; width: 33px; height: 33px; display: grid; place-items: center; border-radius: 4px; background: #fff; box-shadow: 0 0 2px #999; }
.layers svg { width: 20px; height: 18px; }
.credit { position: absolute; right: 0; bottom: 0; height: 14px; padding: 0 4px; display: flex; align-items: center; gap: 3px; background: rgba(255,255,255,.85); font: 9px/14px "Liberation Sans", sans-serif; color: #333; }
.credit svg { width: 8px; height: 6px; }
.credit a { color: #0078a8; text-decoration: none; }
.row { display: grid; grid-template-columns: 1fr 1fr; gap: 12px; margin-bottom: 13px; }
.map + .row { margin-top: 16px; margin-bottom: 12px; }
.field label { display: block; height: 18px; margin-bottom: 4px; color: #444; }
.group { display: flex; height: 30px; border: 1px solid #e4e7eb; border-radius: 5px; overflow: hidden; }
.addon { width: 31px; display: grid; place-items: center; padding-bottom: 2px; background: #f1f4fe; border-right: 1px solid #dfe4ee; }
.addon svg { width: 13px; height: 13px; }
.group input { flex: 1; min-width: 0; border: 0; outline: 0; padding: 2px 9px 0; font: inherit; color: #444; background: #fff; }
.show { display: flex; align-items: center; gap: 3px; height: 23px; padding: 0 6px; border: 1px solid #0d6efd; border-radius: 3px; color: #0d6efd; font-size: 10px; }
.show svg { width: 9px; height: 10px; }
hr { margin: 5px 0 8px; border: 0; border-top: 1px solid #c8c9ca; }
.scroll { width: 16px; flex: none; display: flex; flex-direction: column; align-items: center; padding: 7px 0; gap: 5px; background: #f1f1f1; }
.scroll svg { width: 8px; height: 4px; }
.track { flex: 1; width: 12px; }
.thumb { height: 73%; background: #c1c1c1; }
.modal-foot { height: 55px; flex: none; display: flex; align-items: center; justify-content: flex-end; gap: 5px; padding: 0 12px; border-top: 1px solid #dee2e6; }
.btn { height: 29px; padding: 0 9px; display: flex; align-items: center; gap: 3px; border-radius: 5px; color: #fff; font-size: 12px; }
.btn svg { width: 11px; height: 12px; }
.grey { background: #6c757d; }
.blue { background: #0d6efd; }

.taskbar { height: 37px; flex: none; display: flex; align-items: center; color: #fff; background: linear-gradient(180deg, #3a3b3b 0 1px, #101111 2px, #0b0c0c 60%, #121313), #0b0c0c; }
.task { position: relative; width: 54px; height: 36px; margin-right: 4px; display: grid; place-items: center; border-radius: 3px; }
.task svg { width: 31px; height: 31px; }
.task.start { width: 50px; margin-right: 6px; }
.task.start svg { width: 36px; height: 36px; }
.task .tg { width: 27px; height: 27px; }
.task .cloud { width: 28px; height: 28px; }
.open { border: 1px solid #999; background: linear-gradient(160deg, #777 0, #4a4a4a 40%, #1d1d1d 70%, #333); }
.lit { border-color: #eee; background: linear-gradient(160deg, #e8e8e8, #a5a5a5 45%, #858585 60%, #c9c9c9); }
.stacked { width: 50px; margin-right: 8px; box-shadow: 3px 0 #222, 4px 0 #999; }
.ktc { font-size: 7px; font-weight: 700; fill: #1f63d8; text-anchor: middle; }
.count { position: absolute; right: 11px; bottom: 3px; padding: 0 1px; border-radius: 2px; background: #e5332d; font-size: 7px; line-height: 9px; }
.tray { margin-left: auto; display: flex; align-items: center; }
.tray svg { width: 15px; height: 15px; margin-right: 8px; }
.lang { margin-right: 14px; font-size: 11px; }
.clock { margin: 0 11px 0 4px; font-size: 11px; line-height: 16px; text-align: center; }
.peek { width: 12px; height: 36px; margin-right: 1px; border: 1px solid #777; background: linear-gradient(180deg, #555, #111 50%); }
```
